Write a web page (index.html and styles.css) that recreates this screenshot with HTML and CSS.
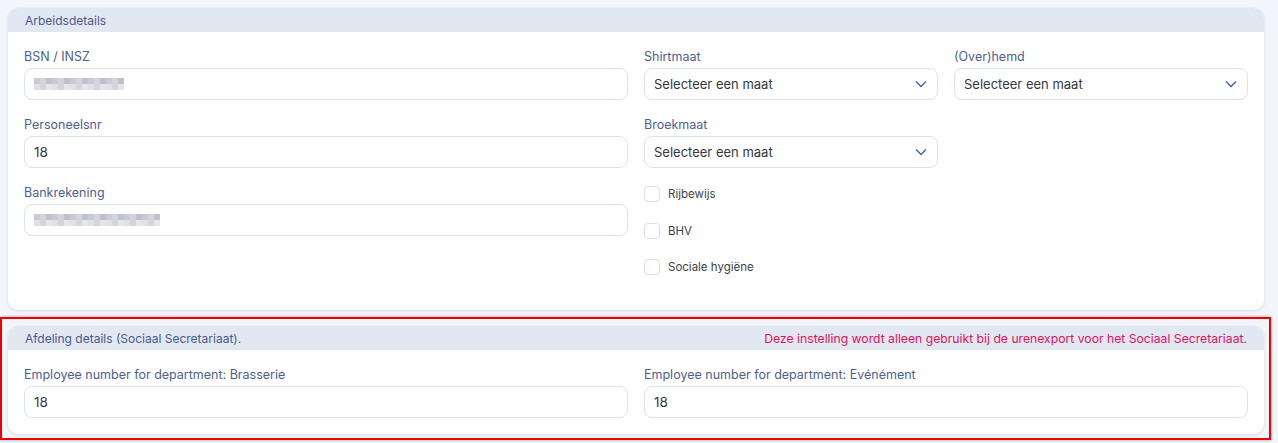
FILE: index.html
```html
<!DOCTYPE html>
<html lang="nl">
<head>
    <meta charset="UTF-8">
    <title>Arbeidsdetails</title>
    <link rel="stylesheet" href="styles.css">
</head>
<body>
    <div class="card">
        <div class="card-header">
            <span>Arbeidsdetails</span>
        </div>
        <div class="card-body grid-halves">
            <div class="col">
                <div class="field">
                    <label>BSN / INSZ</label>
                    <div class="input"><span class="masked masked-short"></span></div>
                </div>
                <div class="field">
                    <label>Personeelsnr</label>
                    <div class="input">18</div>
                </div>
                <div class="field">
                    <label>Bankrekening</label>
                    <div class="input"><span class="masked masked-long"></span></div>
                </div>
            </div>
            <div class="col">
                <div class="grid-halves">
                    <div class="col">
                        <div class="field">
                            <label>Shirtmaat</label>
                            <div class="input select">Selecteer een maat
                                <svg class="chevron" viewBox="0 0 12 8"><path d="M1 1.5l5 5 5-5"/></svg>
                            </div>
                        </div>
                        <div class="field">
                            <label>Broekmaat</label>
                            <div class="input select">Selecteer een maat
                                <svg class="chevron" viewBox="0 0 12 8"><path d="M1 1.5l5 5 5-5"/></svg>
                            </div>
                        </div>
                    </div>
                    <div class="col">
                        <div class="field">
                            <label>(Over)hemd</label>
                            <div class="input select">Selecteer een maat
                                <svg class="chevron" viewBox="0 0 12 8"><path d="M1 1.5l5 5 5-5"/></svg>
                            </div>
                        </div>
                    </div>
                </div>
                <div class="checks">
                    <label class="check"><span class="box"></span>Rijbewijs</label>
                    <label class="check"><span class="box"></span>BHV</label>
                    <label class="check"><span class="box"></span>Sociale hygiëne</label>
                </div>
            </div>
        </div>
    </div>

    <div class="highlight-frame">
        <div class="card">
            <div class="card-header">
                <span>Afdeling details (Sociaal Secretariaat).</span>
                <span class="notice">Deze instelling wordt alleen gebruikt bij de urenexport voor het Sociaal Secretariaat.</span>
            </div>
            <div class="card-body grid-halves">
                <div class="field">
                    <label>Employee number for department: Brasserie</label>
                    <div class="input">18</div>
                </div>
                <div class="field">
                    <label>Employee number for department: Evénément</label>
                    <div class="input">18</div>
                </div>
            </div>
        </div>
    </div>
</body>
</html>
```

FILE: styles.css
```css
body {
    margin: 0;
    padding: 8px 14px 8px 8px;
    background: #f2f5f9;
    font-family: Inter, "Noto Sans", sans-serif;
    color: #34383f;
}
.card {
    background: white;
    border-radius: 10px;
    box-shadow: 0 1px 3px rgba(40, 60, 100, 0.14);
}
.highlight-frame {
    margin: 7px -7px 0 -8px;
    padding: 7px 5px 4px 6px;
    border: 2px solid #f00000;
    box-shadow: 0 0 3px rgba(0, 0, 0, 0.35);
}
.card-header {
    display: flex;
    justify-content: space-between;
    align-items: center;
    height: 24px;
    padding: 0 17px;
    background: #e2e8f2;
    border-radius: 10px 10px 0 0;
    font-size: 12px;
    color: #4a5a86;
}
.notice {
    color: #e0125a;
    font-size: 12.2px;
}
.card-body {
    padding: 18px 16px 16px;
}
.grid-halves {
    display: grid;
    grid-template-columns: 1fr 1fr;
    column-gap: 16px;
}
.col > .field {
    margin-bottom: 18px;
}
.field label {
    display: block;
    font-size: 12.5px;
    color: #4d5f8c;
    height: 14px;
    line-height: 14px;
    margin-bottom: 4px;
}
.input {
    display: flex;
    align-items: center;
    height: 30px;
    padding: 0 9px;
    border: 1px solid #dce2ee;
    border-radius: 8px;
    font-size: 13.5px;
    color: #33373f;
}
.select {
    justify-content: space-between;
    font-size: 13px;
}
.chevron {
    width: 12px;
    height: 8px;
    margin-right: 1px;
    fill: none;
    stroke: #3d5db8;
    stroke-width: 1.3;
}
.masked {
    display: inline-block;
    height: 12px;
    background:
        repeating-linear-gradient(90deg, #c8cbd5 0 6px, #d6d4da 6px 12px, #bcc2cf 12px 18px) top / 100% 6px no-repeat,
        repeating-linear-gradient(90deg, #e0e1e6 0 6px, #d3d5dc 6px 12px, #e6e6ea 12px 18px) bottom / 100% 6px no-repeat;
}
.masked-short {
    width: 90px;
}
.masked-long {
    width: 126px;
}
.checks {
    display: flex;
    flex-direction: column;
    gap: 20.5px;
    margin-bottom: 19px;
}
.check {
    display: flex;
    align-items: center;
    gap: 8px;
    font-size: 11.5px;
    color: #3a3f4a;
    height: 16px;
}
.box {
    width: 14px;
    height: 14px;
    border: 1px solid #d9dfeb;
    border-radius: 4px;
    background: white;
}
```
